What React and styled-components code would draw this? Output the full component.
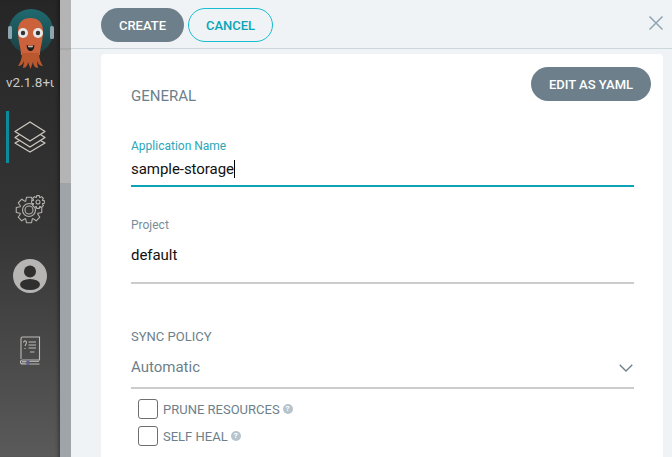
import React from 'react';
import styled, {createGlobalStyle} from "styled-components";

const GlobalStyle=createGlobalStyle`
  html,body{
    margin:0;
    padding:0;
    height:100%;
    overflow:hidden;
    background:#eff3f6;
    font-family:Roboto,"Liberation Sans",sans-serif;
  }
`;

// outline of a cog, used by the settings icon
const gearPath=(cx,cy,inner,outer,teeth)=>{
  const step=Math.PI*2/teeth;
  const pts=[];
  for(let i=0;i<teeth;i++){
    const a=i*step;
    [[inner,-0.5],[outer,-0.28],[outer,0.28],[inner,0.5]].forEach(([r,k])=>{
      const x=cx+r*Math.cos(a+k*step*0.9);
      const y=cy+r*Math.sin(a+k*step*0.9);
      pts.push(x.toFixed(2)+" "+y.toFixed(2));
    });
  }
  return "M"+pts.join("L")+"Z";
};

const Logo=()=>(
  <svg width="47" height="60" viewBox="0 0 47 60">
    <defs>
      <linearGradient id="helmet" x1="0" y1="0" x2="0" y2="1">
        <stop offset="0" stopColor="#1f6a70"/>
        <stop offset="1" stopColor="#1d3f42"/>
      </linearGradient>
    </defs>
    <circle cx="23" cy="22.500" r="22.500" fill="url(#helmet)"/>
    <rect x="0" y="17" width="4" height="13" rx="1.500" fill="#8ea4ae"/>
    <rect x="42" y="17" width="4" height="13" rx="1.500" fill="#8ea4ae"/>
    <path d="M10 22C10 13 15 9 22.500 9S35 13 35 22C35 33 32 38 32 46L13 46C13 38 10 33 10 22Z" fill="#cc623b"/>
    <path d="M14 44C14 50 12 54 10 57C13 57 15 55 16 52C16 55 15 57 15 59C18 59 20 56 20 53L22.500 60L25 53C25 56 27 59 30 59C30 57 29 55 29 52C30 55 32 57 35 57C33 54 31 50 31 44Z" fill="#b9572f"/>
    <circle cx="15" cy="24" r="5" fill="#e6e6e6"/>
    <circle cx="30" cy="24" r="5" fill="#e6e6e6"/>
    <circle cx="15" cy="24" r="2.200" fill="#333"/>
    <circle cx="30" cy="24" r="2.200" fill="#333"/>
    <path d="M18.500 36Q22.500 38 26.500 36Q26 42 22.500 42Q19 42 18.500 36Z" fill="#1c1c1c"/>
    <path d="M20 36.800Q22.500 37.800 25 36.800L24.500 38.300H20.500Z" fill="#eeeeee"/>
  </svg>
);

const LayersIcon=()=>(
  <svg width="34" height="32" viewBox="0 0 34 32" fill="none" stroke="#cfc9c0" strokeWidth="1.300" strokeLinejoin="round">
    <path d="M17 1L32 10.500L17 20L2 10.500Z"/>
    <path d="M6.500 13.500L2 16.500L17 26L32 16.500L27.500 13.500"/>
    <path d="M6.500 19.500L2 22L17 31L32 22L27.500 19.500"/>
  </svg>
);

const GearsIcon=()=>(
  <svg width="30" height="30" viewBox="0 0 30 30" fill="none" stroke="#b5b3af" strokeWidth="1.100" strokeLinejoin="round">
    <path d={gearPath(14,16,9.500,13,8)}/>
    <circle cx="14" cy="16" r="4"/>
    <circle cx="14" cy="16" r="6.500"/>
    <path d={gearPath(23,8,4.800,6.500,8)} fill="#2e2e2e"/>
    <circle cx="23" cy="8" r="2"/>
  </svg>
);

const UserIcon=()=>(
  <svg width="34" height="34" viewBox="0 0 34 34">
    <circle cx="17" cy="17" r="17" fill="#b7b5b3"/>
    <circle cx="17" cy="12.500" r="6" fill="#2f2f2f"/>
    <ellipse cx="17" cy="25.500" rx="10" ry="5.500" fill="#2f2f2f"/>
  </svg>
);

const BookIcon=()=>(
  <svg width="22" height="29" viewBox="0 0 22 29" fill="none" stroke="#bdbbb7" strokeWidth="1.100">
    <path d="M2 23V2.500Q2 1 3.500 1H20.500V24H3.500Q1.500 24 1.500 26T3.500 28H20.500"/>
    <path d="M9.500 6H17M9.500 9H17M9.500 12H17M11 16H15.500"/>
    <path d="M4.500 6.500Q5 4.500 6.500 5T7 8L6 10M6 12V13"/>
    <path d="M3 25.500H20M3 27H7" strokeWidth="0.900"/>
    <rect x="7.500" y="24.500" width="3" height="4.500" fill="#5d5f90" stroke="none"/>
  </svg>
);

const CloseIcon=()=>(
  <svg width="14" height="14" viewBox="0 0 14 14" stroke="#8fa4b1" strokeWidth="1.500" fill="none">
    <path d="M0.500 0.500L13.500 13.500M13.500 0.500L0.500 13.500"/>
  </svg>
);

const ChevronIcon=()=>(
  <svg width="14" height="8" viewBox="0 0 14 8" stroke="#6d7f8b" strokeWidth="1.300" fill="none">
    <path d="M0.700 0.700L7 7L13.300 0.700"/>
  </svg>
);

const HelpIcon=()=>(
  <HelpDot>?</HelpDot>
);

export default function App() {
  return (
    <Wrapper>
      <GlobalStyle/>
      <Sidebar>
        <LogoSlot><Logo/></LogoSlot>
        <Version>v2.1.8+u</Version>
        <NavItem $active $height={52}><LayersIcon/></NavItem>
        <NavItem $height={92}><GearsIcon/></NavItem>
        <NavItem $height={42}><UserIcon/></NavItem>
        <NavItem $height={107}><BookIcon/></NavItem>
      </Sidebar>
      <ScrollTrack>
        <ScrollThumb/>
      </ScrollTrack>
      <Panel>
        <Header>
          <PrimaryButton>CREATE</PrimaryButton>
          <OutlineButton>CANCEL</OutlineButton>
          <CloseSlot><CloseIcon/></CloseSlot>
        </Header>
        <Card>
          <YamlButton>EDIT AS YAML</YamlButton>
          <SectionTitle>GENERAL</SectionTitle>
          <Field $active $top={35}>
            <FieldLabel $active>Application Name</FieldLabel>
            <FieldValue $gap={6} $height={26}>sample-storage<Caret/></FieldValue>
          </Field>
          <Field $top={31}>
            <FieldLabel>Project</FieldLabel>
            <FieldValue $gap={13} $height={37}>default</FieldValue>
          </Field>
          <PolicyTitle>SYNC POLICY</PolicyTitle>
          <Select>
            <SelectValue>Automatic</SelectValue>
            <ChevronIcon/>
          </Select>
          <CheckRow $top={10}><Box/><CheckLabel>PRUNE RESOURCES</CheckLabel><HelpIcon/></CheckRow>
          <CheckRow $top={7}><Box/><CheckLabel>SELF HEAL</CheckLabel><HelpIcon/></CheckRow>
        </Card>
      </Panel>
    </Wrapper>
  );
}

const Wrapper=styled.div`
  display:flex;
  width:672px;
  height:457px;
  overflow:hidden;
`;

const Sidebar=styled.nav`
  width:60px;
  flex:none;
  display:flex;
  flex-direction:column;
  align-items:stretch;
  background:linear-gradient(180deg,#262626 0%,#353535 50%,#5a5a5a 100%);
  box-shadow:inset -4px 0 4px -3px rgba(0,0,0,.45);
`;

const LogoSlot=styled.div`
  height:60px;
  padding:9px 0 0 8px;
  display:flex;
`;

const Version=styled.div`
  margin-top:5px;
  height:16px;
  width:48px;
  margin-left:6px;
  overflow:hidden;
  white-space:nowrap;
  color:#c9c9c9;
  font-size:13.500px;
  line-height:16px;
`;

const NavItem=styled.div`
  height:${p=>p.$height}px;
  flex:none;
  margin-top:${p=>p.$active?"21px":"0"};
  margin-left:6px;
  padding-right:9px;
  display:flex;
  align-items:center;
  justify-content:center;
  border-left:3px solid ${p=>p.$active?"#0b8c9c":"transparent"};
`;

const ScrollTrack=styled.div`
  width:11px;
  flex:none;
  background:#9fa4a8;
`;

const ScrollThumb=styled.div`
  height:183px;
  background:linear-gradient(#b4b4b4 48px,#a8a8a8 48px,#a8a8a8 50px,#b4b4b4 50px);
`;

const Panel=styled.main`
  flex:1;
  min-width:0;
  display:flex;
  flex-direction:column;
  background:#eff3f6;
`;

const Header=styled.header`
  height:49px;
  box-sizing:border-box;
  flex:none;
  display:flex;
  align-items:center;
  gap:4px;
  padding:2px 9px 0 30px;
  border-bottom:1px solid #ccd6dd;
`;

const PrimaryButton=styled.div`
  width:83px;
  height:34px;
  box-sizing:border-box;
  border-radius:17px;
  background:#6d7f8b;
  color:#fff;
  display:flex;
  align-items:center;
  justify-content:center;
  font-size:13px;
  font-weight:500;
`;

const OutlineButton=styled(PrimaryButton)`
  width:85px;
  background:transparent;
  border:1px solid #18bdd0;
  color:#0aa5b8;
`;

const CloseSlot=styled.div`
  margin-left:auto;
  display:flex;
  margin-top:-5px;
`;

const Card=styled.section`
  position:relative;
  margin:5px 9px 0 30px;
  flex:1;
  padding:34px 29px 0 30px;
  background:#fff;
  border-radius:4px 4px 0 0;
`;

const YamlButton=styled(PrimaryButton)`
  position:absolute;
  top:13px;
  right:12px;
  width:120px;
`;

const SectionTitle=styled.div`
  font-size:15px;
  line-height:16px;
  color:#6d7f8b;
`;

const Field=styled.div`
  margin-top:${p=>p.$top}px;
  border-bottom:${p=>p.$active?"2px solid #0ba3b5":"2px solid #ccc"};
`;

const FieldLabel=styled.div`
  font-size:12px;
  line-height:14px;
  color:${p=>p.$active?"#2aa6ba":"#7a8c98"};
`;

const FieldValue=styled.div`
  margin-top:${p=>p.$gap}px;
  height:${p=>p.$height}px;
  font-size:15px;
  line-height:20px;
  letter-spacing:-0.050px;
  color:#111;
  display:flex;
  align-items:flex-start;
`;

const Caret=styled.span`
  display:inline-block;
  width:1px;
  height:18px;
  margin-top:1px;
  background:#000;
`;

const PolicyTitle=styled.div`
  margin-top:45px;
  font-size:13px;
  line-height:15px;
  color:#6d7f8b;
`;

const Select=styled.div`
  margin-top:5px;
  height:40px;
  box-sizing:border-box;
  padding-right:1px;
  display:flex;
  align-items:center;
  justify-content:space-between;
  border-bottom:2px solid #ccc;
  font-size:15px;
  color:#6d7f8b;
`;

const SelectValue=styled.span`
  margin-bottom:2px;
`;

const CheckRow=styled.div`
  margin-top:${p=>p.$top}px;
  margin-left:7px;
  display:flex;
  align-items:center;
`;

const Box=styled.div`
  width:20px;
  height:20px;
  box-sizing:border-box;
  border:1px solid #6f6f6f;
  border-radius:3px;
  background:#fff;
  margin-right:5px;
`;

const CheckLabel=styled.span`
  font-size:13px;
  color:#6d7f8b;
`;

const HelpDot=styled.span`
  width:10px;
  height:10px;
  margin-left:3px;
  border-radius:50%;
  background:#b8c4cc;
  color:#fff;
  font-size:8px;
  font-weight:700;
  line-height:10px;
  text-align:center;
`;
